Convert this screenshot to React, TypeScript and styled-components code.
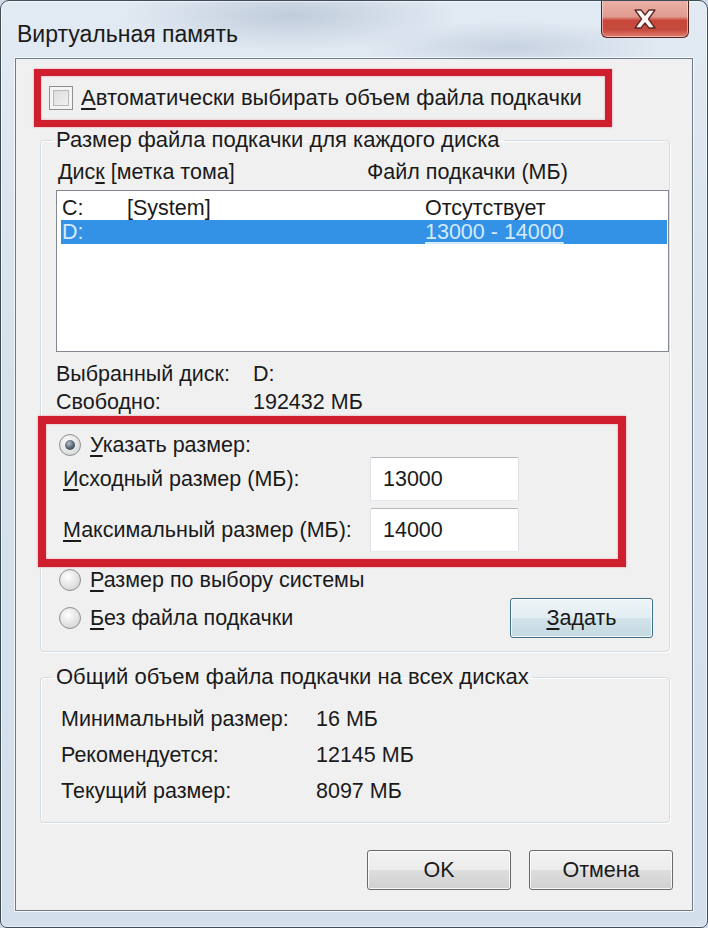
import styled, { createGlobalStyle, css } from "styled-components";
import { FC } from "react";

const GlobalStyle = createGlobalStyle`
  html, body {
    margin: 0;
    padding: 0;
  }
  body {
    font-family: "Liberation Sans", Arial, sans-serif;
    background: #cfdbe8;
  }
  * {
    box-sizing: border-box;
  }
`;

const drives = [
  { letter: "C:", label: "[System]", size: "Отсутствует", selected: false },
  { letter: "D:", label: "", size: "13000 - 14000", selected: true },
];

const totals = [
  { label: "Минимальный размер:", value: "16 МБ" },
  { label: "Рекомендуется:", value: "12145 МБ" },
  { label: "Текущий размер:", value: "8097 МБ" },
];

const CloseIcon: FC = () => (
  <svg width="24" height="20" viewBox="0 0 24 20">
    <polygon
      points="2,1 8,1 12,6 16,1 22,1 15.5,10 22,19 16,19 12,14 8,19 2,19 8.5,10"
      fill="#fdf6f4"
      stroke="#5a2b27"
      strokeWidth="1.3"
      strokeLinejoin="round"
    />
  </svg>
);

export default function App() {
  return (
    <>
      <GlobalStyle />
      <Window>
        <TitleBar>
          <Title>Виртуальная память</Title>
          <CloseButton>
            <CloseIcon />
          </CloseButton>
        </TitleBar>
        <Client>
          <Highlight $width={578} $thick={7} $left={18}>
            <CheckRow>
              <CheckBox />
              <Text $size={22}>
                <Key>А</Key>втоматически выбирать объем файла подкачки
              </Text>
            </CheckRow>
          </Highlight>

          <Group $top={1}>
            <Legend>Размер файла подкачки для каждого диска</Legend>
            <ColumnHeaders>
              <span>
                Дис<Key>к</Key> [метка тома]
              </span>
              <span>Файл подкачки (МБ)</span>
            </ColumnHeaders>
            <ListBox>
              {drives.map((d) => (
                <DriveRow key={d.letter} $selected={d.selected}>
                  <span>{d.letter}</span>
                  <span>{d.label}</span>
                  <SizeCell $selected={d.selected}>{d.size}</SizeCell>
                </DriveRow>
              ))}
            </ListBox>
            <InfoGrid>
              <span>Выбранный диск:</span>
              <span>D:</span>
              <span>Свободно:</span>
              <span>192432 МБ</span>
            </InfoGrid>

            <Highlight $width={588} $thick={8} $left={-18}>
              <SizeBox>
                <RadioRow>
                  <Radio $checked />
                  <Text>
                    <Key>У</Key>казать размер:
                  </Text>
                </RadioRow>
                <FieldRow>
                  <Text>
                    <Key>И</Key>сходный размер (МБ):
                  </Text>
                  <TextBox>13000</TextBox>
                </FieldRow>
                <FieldRow>
                  <Text>
                    <Key>М</Key>аксимальный размер (МБ):
                  </Text>
                  <TextBox>14000</TextBox>
                </FieldRow>
              </SizeBox>
            </Highlight>

            <OptionsRow>
              <RadioList>
                <RadioRow>
                  <Radio />
                  <Text>
                    <Key>Р</Key>азмер по выбору системы
                  </Text>
                </RadioRow>
                <RadioRow>
                  <Radio />
                  <Text>
                    <Key>Б</Key>ез файла подкачки
                  </Text>
                </RadioRow>
              </RadioList>
              <SetButton $focused>
                <Key>З</Key>адать
              </SetButton>
            </OptionsRow>
          </Group>

          <Group $top={13}>
            <Legend>Общий объем файла подкачки на всех дисках</Legend>
            <StatsGrid>
              {totals.map((t) => (
                <StatRow key={t.label}>
                  <span>{t.label}</span>
                  <span>{t.value}</span>
                </StatRow>
              ))}
            </StatsGrid>
          </Group>

          <Footer>
            <Button>OK</Button>
            <Button>Отмена</Button>
          </Footer>
        </Client>
      </Window>
    </>
  );
}

const Window = styled.div`
  width: 708px;
  height: 928px;
  display: flex;
  flex-direction: column;
  padding: 0 14px 16px 14px;
  border: 1px solid #3f4b58;
  border-radius: 9px 9px 7px 7px;
  overflow: hidden;
  background: radial-gradient(
      ellipse 170px 36px at 290px 14px,
      rgba(130, 150, 175, 0.35),
      transparent
    ),
    radial-gradient(
      ellipse 150px 26px at 510px 46px,
      rgba(140, 160, 185, 0.3),
      transparent
    ),
    linear-gradient(180deg, #e2eaf3 0%, #d6e1ec 40%, #d3dfeb 100%);
  box-shadow: inset 0 0 0 1px rgba(255, 255, 255, 0.6);
`;

const TitleBar = styled.div`
  height: 57px;
  flex-shrink: 0;
  display: flex;
  justify-content: space-between;
  align-items: flex-start;
`;

const Title = styled.div`
  margin: 20px 0 0 2px;
  font-size: 23px;
  line-height: 26px;
  color: #1a1a1a;
`;

const CloseButton = styled.div`
  width: 88px;
  height: 38px;
  margin: -1px 4px 0 0;
  display: flex;
  align-items: center;
  justify-content: center;
  border: 1px solid #52241f;
  border-top: none;
  border-radius: 0 0 6px 6px;
  background: linear-gradient(
    180deg,
    #ebb2a8 0%,
    #e19a8f 45%,
    #c9473a 55%,
    #c54a3d 80%,
    #e27d6e 100%
  );
  box-shadow: inset 0 0 0 1px rgba(255, 255, 255, 0.45);
`;

const Client = styled.div`
  flex: 1;
  display: flex;
  flex-direction: column;
  padding-top: 10px;
  background: #f0f0f0;
  border: 1px solid #6d7a88;
  box-shadow: 0 0 0 1px rgba(255, 255, 255, 0.7);
  font-size: 21.5px;
  color: #1a1a1a;
`;

const Highlight = styled.div<{ $width: number; $thick: number; $left: number }>`
  width: ${(p) => p.$width}px;
  margin-left: ${(p) => p.$left}px;
  border: ${(p) => p.$thick}px solid #cf1f2e;
  box-shadow: 0 0 2px rgba(220, 60, 70, 0.5),
    inset 0 0 2px rgba(220, 60, 70, 0.5);
`;

const Text = styled.span<{ $size?: number }>`
  line-height: 24px;
  white-space: nowrap;
  ${(p) => p.$size && `font-size: ${p.$size}px;`}
`;

const Key = styled.span`
  text-decoration: underline;
  text-underline-offset: 3px;
  text-decoration-thickness: 2px;
`;

const CheckRow = styled.div`
  height: 44px;
  display: flex;
  align-items: center;
  gap: 8px;
  padding-left: 8px;
`;

const CheckBox = styled.span`
  width: 24px;
  height: 24px;
  flex-shrink: 0;
  border: 1px solid #8e8f8f;
  background: linear-gradient(135deg, #d6d6d6 0%, #f7f7f7 100%);
  box-shadow: inset 0 0 0 3px #f4f4f4, inset 0 0 0 4px #b9b9b9;
`;

const Group = styled.fieldset<{ $top: number }>`
  margin: ${(p) => p.$top}px 22px 0 24px;
  padding: 0 0 13px 15px;
  min-width: 0;
  border: 1px solid #d3dce2;
  border-radius: 4px;
  box-shadow: inset 1px 1px 0 #fff, 1px 1px 0 #fff;
`;

const Legend = styled.legend`
  padding: 0 4px;
  margin-left: -4px;
  font-size: 22px;
  line-height: 24px;
`;

const ColumnHeaders = styled.div`
  margin-top: 8px;
  padding-left: 2px;
  display: grid;
  grid-template-columns: 309px 1fr;
  line-height: 24px;
`;

const ListBox = styled.div`
  margin-top: 6px;
  height: 162px;
  padding: 5px 1px 0 4px;
  background: #fff;
  border: 1px solid #828790;
`;

const DriveRow = styled.div<{ $selected?: boolean }>`
  height: 24px;
  padding-left: 1px;
  display: grid;
  grid-template-columns: 65px 298px 1fr;
  align-items: center;
  background: ${(p) => (p.$selected ? "#3391e6" : "transparent")};
  color: ${(p) => (p.$selected ? "#d3eaff" : "#1a1a1a")};
`;

const SizeCell = styled.span<{ $selected?: boolean }>`
  ${(p) =>
    p.$selected &&
    css`
      text-decoration: underline;
      text-underline-offset: 3px;
    `}
`;

const InfoGrid = styled.div`
  margin-top: 8px;
  display: grid;
  grid-template-columns: 197px 1fr;
  line-height: 28px;
`;

const SizeBox = styled.div`
  padding: 9px 0 7px 0;
  display: flex;
  flex-direction: column;
`;

const RadioRow = styled.div`
  height: 24px;
  display: flex;
  align-items: center;
  gap: 9px;
  padding-left: 3px;

  ${SizeBox} & {
    padding-left: 13px;
  }
`;

const Radio = styled.span<{ $checked?: boolean }>`
  width: 22px;
  height: 22px;
  flex-shrink: 0;
  position: relative;
  border-radius: 50%;
  border: 1px solid #8e8f8f;
  background: radial-gradient(circle at 40% 35%, #ffffff 0%, #d8d8d8 75%);
  ${(p) =>
    p.$checked &&
    css`
      &::after {
        content: "";
        position: absolute;
        inset: 5px;
        border-radius: 50%;
        background: radial-gradient(
          circle at 40% 35%,
          #b2c0cc 0%,
          #52616f 55%,
          #2c3844 100%
        );
      }
    `}
`;

const FieldRow = styled.div`
  height: 44px;
  padding-left: 17px;
  display: grid;
  grid-template-columns: 307px 149px;
  align-items: center;

  & + & {
    margin-top: 7px;
  }
`;

const TextBox = styled.div`
  height: 44px;
  padding-left: 12px;
  display: flex;
  align-items: center;
  background: #fff;
  border: 1px solid;
  border-color: #b5b8bf #dbdfe6 #e3e9ef #dbdfe6;
  border-radius: 2px;
`;

const OptionsRow = styled.div`
  margin-top: 1px;
  display: flex;
  justify-content: space-between;
  align-items: flex-start;
`;

const RadioList = styled.div`
  display: flex;
  flex-direction: column;
  gap: 14px;
`;

const Button = styled.div<{ $focused?: boolean }>`
  width: 144px;
  height: 40px;
  display: flex;
  align-items: center;
  justify-content: center;
  border: 1px solid #6a6a6a;
  border-radius: 3px;
  background: linear-gradient(
    180deg,
    #f3f3f3 0%,
    #ebebeb 50%,
    #dddddd 50%,
    #d1d1d1 100%
  );
  box-shadow: inset 0 0 0 1px rgba(255, 255, 255, 0.8);
  ${(p) =>
    p.$focused &&
    css`
      border-color: #3d6f8b;
      background: linear-gradient(
        180deg,
        #eef5f8 0%,
        #e2edf2 50%,
        #d2e3ea 50%,
        #c4d9e2 100%
      );
    `}
`;

const SetButton = styled(Button)`
  width: 143px;
  margin: 30px 16px 0 0;
`;

const StatsGrid = styled.div`
  margin: 12px 0 0 5px;
  display: flex;
  flex-direction: column;
`;

const StatRow = styled.div`
  display: grid;
  grid-template-columns: 255px 1fr;
  line-height: 36px;
`;

const Footer = styled.div`
  margin: 27px 19px 0 0;
  display: flex;
  justify-content: flex-end;
  gap: 18px;
`;
